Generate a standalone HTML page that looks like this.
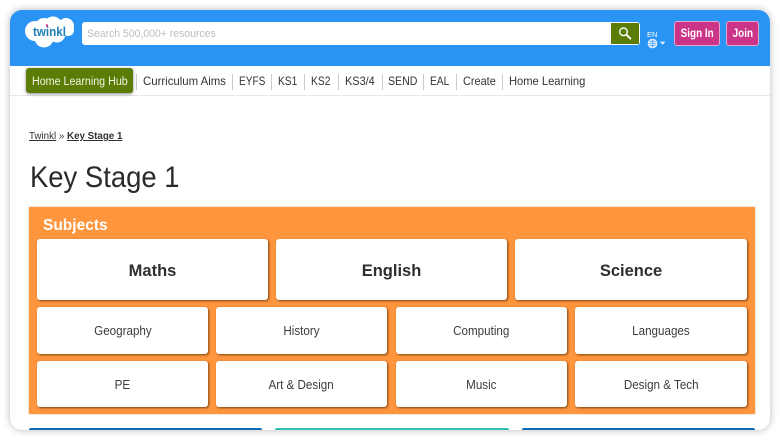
<!DOCTYPE html>
<html lang="en">
<head>
<meta charset="utf-8">
<title>Key Stage 1</title>
<style>
html,body{margin:0;padding:0;width:780px;height:440px;overflow:hidden;background:#fff;font-family:"Liberation Sans",sans-serif}
.a{position:absolute}
#win{position:absolute;left:10px;top:10px;width:760px;height:420px;border-radius:12px;background:#fff;overflow:hidden;box-shadow:0 0 8px rgba(0,0,0,.28)}
.t{position:absolute;white-space:nowrap;color:#333;transform-origin:0 50%}
.nav{position:absolute;top:74px;height:15px;line-height:15px;font-size:12px;color:#333;white-space:nowrap;transform-origin:0 50%}
.sep{position:absolute;top:74px;width:1px;height:16px;background:#ccc}
.card{position:absolute;background:#fff;border-radius:3px;box-shadow:1px 1px 2px rgba(90,50,10,.8);display:flex;align-items:center;justify-content:center;color:#3c3c3c;font-size:12.5px;white-space:nowrap;box-sizing:border-box;padding-top:1px}
.card span{display:inline-block;transform:scaleX(.93)}
.big{font-size:16.5px;font-weight:bold;color:#2e2e2e;padding-top:3px}
.big span{transform:none}
.btn{position:absolute;top:21px;height:25px;box-sizing:border-box;background:#cc3587;border:1px solid #e8a6cc;border-radius:3px;color:#fff;font-size:11.5px;font-weight:bold;line-height:24px;text-align:center;white-space:nowrap}
.btn span{display:inline-block;transform:scaleX(.86)}
</style>
</head>
<body>
<div id="win"></div>
<div class="a" style="left:10px;top:10px;width:760px;height:56px;background:#2a94f4;border-radius:12px 12px 0 0"></div>

<svg class="a" style="left:24px;top:15px" width="54" height="34" viewBox="0 0 54 34">
<g fill="#fff">
<circle cx="11" cy="16" r="10"/>
<circle cx="20" cy="12" r="9"/>
<circle cx="29" cy="11" r="9.5"/>
<circle cx="42" cy="11" r="8"/>
<circle cx="20" cy="23" r="9.5"/>
<circle cx="33" cy="19" r="8.5"/>
<circle cx="44" cy="15" r="6"/>
</g>
<text x="9" y="21" font-family="Liberation Sans,sans-serif" font-size="12.5" font-weight="bold" fill="#1d7fb8" textLength="33" lengthAdjust="spacingAndGlyphs">twinkl</text>
<circle cx="23" cy="10.5" r="1.2" fill="#d6307f"/>
</svg>

<div class="a" style="left:82px;top:22px;width:558px;height:23px;background:#fff;border-radius:3px"></div>
<div class="t" style="left:87px;top:27px;font-size:11px;line-height:14px;color:#bdbdbd;transform:scaleX(.95)">Search 500,000+ resources</div>
<div class="a" style="left:611px;top:23px;width:28px;height:21px;background:#5b7c05"></div>
<svg class="a" style="left:617px;top:26px" width="16" height="15" viewBox="0 0 16 15">
<circle cx="6.5" cy="5.8" r="3.8" fill="none" stroke="#fff" stroke-width="1.4"/>
<path d="M9.5 8.8L13.4 12.6" stroke="#fff" stroke-width="1.9" stroke-linecap="round"/>
</svg>

<div class="t" style="left:647px;top:30px;font-size:7.5px;line-height:9px;color:#fff">EN</div>
<svg class="a" style="left:647px;top:38px" width="20" height="11" viewBox="0 0 20 11">
<circle cx="5.5" cy="5.5" r="4.4" fill="#d5e9fb" stroke="#fff" stroke-width=".8"/>
<path d="M1.2 5.5H9.8M5.5 1.2V9.8M2.4 3.2H8.6M2.4 7.8H8.6" stroke="#2a94f4" stroke-width=".6" fill="none"/>
<path d="M13 3.6H18.4L15.7 6.6Z" fill="#e3f1fd"/>
</svg>

<div class="btn" style="left:674px;width:46px"><span>Sign In</span></div>
<div class="btn" style="left:726px;width:33px"><span>Join</span></div>

<div class="a" style="left:10px;top:95px;width:760px;height:1px;background:#e8e8e8"></div>
<div class="a" style="left:26px;top:68px;width:107px;height:25px;background:#5b7c05;border-radius:3px;box-shadow:0 1px 3px rgba(0,0,0,.45)"></div>
<div class="t" style="left:32px;top:75px;font-size:11.5px;line-height:15px;color:#f2f5e6;transform:scaleX(.93)">Home Learning Hub</div>

<div class="sep" style="left:136px"></div>
<div class="nav" style="left:143px;transform:scaleX(.95)">Curriculum Aims</div>
<div class="sep" style="left:232px"></div>
<div class="nav" style="left:239px;transform:scaleX(.84)">EYFS</div>
<div class="sep" style="left:271px"></div>
<div class="nav" style="left:278px;transform:scaleX(.85)">KS1</div>
<div class="sep" style="left:304px"></div>
<div class="nav" style="left:311px;transform:scaleX(.86)">KS2</div>
<div class="sep" style="left:338px"></div>
<div class="nav" style="left:345px;transform:scaleX(.91)">KS3/4</div>
<div class="sep" style="left:382px"></div>
<div class="nav" style="left:388px;transform:scaleX(.88)">SEND</div>
<div class="sep" style="left:423px"></div>
<div class="nav" style="left:430px;transform:scaleX(.85)">EAL</div>
<div class="sep" style="left:456px"></div>
<div class="nav" style="left:463px;transform:scaleX(.91)">Create</div>
<div class="sep" style="left:502px"></div>
<div class="nav" style="left:509px;transform:scaleX(.93)">Home Learning</div>

<div class="t" style="left:29px;top:130px;font-size:10.5px;line-height:13px;color:#333;transform:scaleX(.93)"><span style="text-decoration:underline">Twinkl</span> » <span style="text-decoration:underline;font-weight:bold">Key Stage 1</span></div>
<div class="t" style="left:30px;top:160px;font-size:29.5px;line-height:36px;color:#2a2a2a;transform:scaleX(.93)">Key Stage 1</div>

<div class="a" style="left:29px;top:207px;width:726px;height:207px;background:#ff953c;box-shadow:0 0 1px rgba(120,70,20,.6)"></div>
<div class="t" style="left:43px;top:216px;font-size:15.5px;line-height:19px;font-weight:bold;color:#fff">Subjects</div>

<div class="card big" style="left:37px;top:239px;width:231px;height:61px"><span>Maths</span></div>
<div class="card big" style="left:276px;top:239px;width:231px;height:61px"><span>English</span></div>
<div class="card big" style="left:515px;top:239px;width:232px;height:61px"><span>Science</span></div>

<div class="card" style="left:37px;top:307px;width:171px;height:47px"><span>Geography</span></div>
<div class="card" style="left:216px;top:307px;width:171px;height:47px"><span>History</span></div>
<div class="card" style="left:396px;top:307px;width:171px;height:47px"><span>Computing</span></div>
<div class="card" style="left:575px;top:307px;width:172px;height:47px"><span>Languages</span></div>

<div class="card" style="left:37px;top:361px;width:171px;height:46px"><span>PE</span></div>
<div class="card" style="left:216px;top:361px;width:171px;height:46px"><span>Art &amp; Design</span></div>
<div class="card" style="left:396px;top:361px;width:171px;height:46px"><span>Music</span></div>
<div class="card" style="left:575px;top:361px;width:172px;height:46px"><span>Design &amp; Tech</span></div>

<div class="a" style="left:29px;top:428px;width:233px;height:2px;background:#0a6cb4;border-radius:3px 3px 0 0"></div>
<div class="a" style="left:275px;top:428px;width:234px;height:2px;background:#2fc0b4;border-radius:3px 3px 0 0"></div>
<div class="a" style="left:522px;top:428px;width:233px;height:2px;background:#0a6cb4;border-radius:3px 3px 0 0"></div>
</body>
</html>
